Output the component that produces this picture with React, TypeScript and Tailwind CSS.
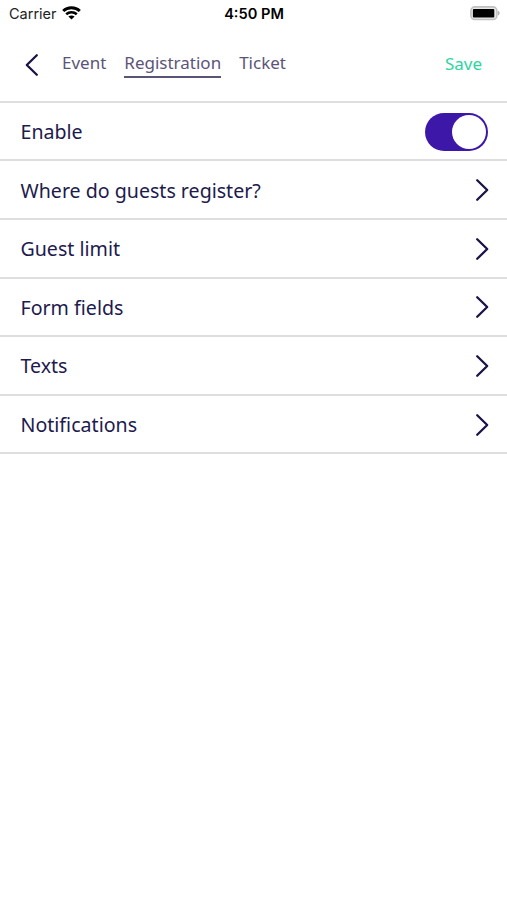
import React, { useState } from "react";

const rows = [
	"Where do guests register?",
	"Guest limit",
	"Form fields",
	"Texts",
	"Notifications",
];

const tabs = ["Event", "Registration", "Ticket"];

const StatusBar = () => (
	<div className="grid h-7 grid-cols-3 items-center pl-[9px] pr-[7px] font-['Inter',sans-serif] text-black">
		<div className="flex items-center gap-[5px] text-[14.5px] leading-7 text-[#222]">
			<span>Carrier</span>
			<svg className="mb-[2px]" width="19" height="14" viewBox="0 0 19 14" fill="none" stroke="#000">
				<path d="M1.2 5C5.6 .7 13.4 .7 17.8 5" strokeWidth="2.9" />
				<path d="M4.2 8.2c3-2.7 7.6-2.7 10.6 0" strokeWidth="2.5" />
				<path d="M9.5 13.6 6.4 10.6c1.7-1.5 4.5-1.5 6.2 0z" fill="#000" stroke="none" />
			</svg>
		</div>
		<div className="pr-px text-center text-[14.6px] font-semibold leading-7">
			4:50 PM
		</div>
		<div className="flex justify-end">
			<svg className="mb-[2px]" width="31" height="16" viewBox="0 0 31 16">
				<rect x="1.9" y="1.9" width="26" height="12.6" rx="4" fill="#e8e8e8" stroke="#c0c0c0" strokeWidth="1.6" />
				<rect x="3.9" y="3.9" width="21.4" height="8.6" rx="1" fill="#000" />
				<path d="M29 5.8c2.2 .9 2.2 3.7 0 4.6z" fill="#b0b0b0" />
			</svg>
		</div>
	</div>
);

const Chevron = ({ className = "" }: { className?: string }) => (
	<svg
		className={className}
		width="14"
		height="24"
		viewBox="0 0 14 24"
		fill="none"
		stroke="#1b1246"
		strokeWidth="2.3"
		strokeLinecap="round"
		strokeLinejoin="round"
	>
		<path d="M2.2 2.2 12.2 12 2.2 21.8" />
	</svg>
);

const Row = ({
	label,
	children,
}: { label: string; children: React.ReactNode }) => (
	<div className="flex h-[58.6px] items-center justify-between border-b-2 border-[#dededf] pl-[20.5px] pr-[19px] pt-px">
		<span className="pt-px text-[19.6px] leading-7 text-[#211a4d]">
			{label}
		</span>
		{children}
	</div>
);

export default function App() {
	const [enabled, setEnabled] = useState(true);
	const [activeTab, setActiveTab] = useState("Registration");

	return (
		<div className="min-h-screen bg-white font-['Noto_Sans',sans-serif]">
			<StatusBar />

			<header className="flex h-[74.8px] items-center border-b-2 border-[#dededf] pl-[25px] pr-[25px]">
				<button className="mr-[23px] pt-px" aria-label="Back">
					<Chevron className="rotate-180" />
				</button>
				<nav className="flex gap-[18px]">
					{tabs.map((tab) => (
						<button
							key={tab}
							onClick={() => setActiveTab(tab)}
							className={`border-b-2 pb-px text-[17px] leading-6 text-[#5c5478] ${
								tab === activeTab ? "border-[#5c5478]" : "border-transparent"
							}`}
						>
							{tab}
						</button>
					))}
				</nav>
				<button className="mb-px ml-auto text-[17px] leading-6 text-[#2bd6a0]">
					Save
				</button>
			</header>

			<main>
				<Row label="Enable">
					<button
						role="switch"
						aria-checked={enabled}
						aria-label="Enable"
						onClick={() => setEnabled(!enabled)}
						className={`flex h-[38px] w-[63px] items-center rounded-full px-[2px] ${
							enabled ? "justify-end bg-[#3d17a8]" : "justify-start bg-gray-300"
						}`}
					>
						<span className="h-[34px] w-[34px] rounded-full bg-white" />
					</button>
				</Row>
				{rows.map((label) => (
					<Row key={label} label={label}>
						<Chevron className="-mr-px" />
					</Row>
				))}
			</main>
		</div>
	);
}
